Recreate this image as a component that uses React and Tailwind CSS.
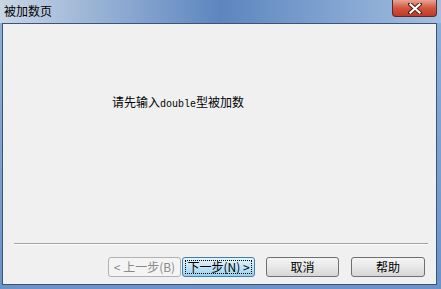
import React from 'react'

const cjk = { fontFamily: '"Noto Sans CJK SC", "Noto Sans", sans-serif' }

function WizButton({ children, disabled, focused, className = '' }) {
  let look = 'border-[#707070] bg-gradient-to-b from-[#f4f4f4] via-[#e8e8e8] to-[#d6d6d6] text-black'
  if (disabled) look = 'border-[#adb2b5] bg-[#f4f4f4] text-[#8a8a8a]'
  if (focused) look = 'border-[#3c7fb1] bg-gradient-to-b from-[#e5f4fc] via-[#c4e5f6] to-[#98d1ef] text-black'
  return (
    <div className={`relative h-[20px] w-[73px] rounded-[3px] border flex items-center justify-center text-[12px] leading-none ${look} ${className}`} style={cjk}>
      {focused && <div className="absolute inset-[2px] border border-dotted border-black" />}
      <span className="relative">{children}</span>
    </div>
  )
}

export default function App() {
  return (
    <div className="w-[441px] h-[289px] flex flex-col bg-gradient-to-b from-[#8fb0d8] to-[#6b93c8] select-none overflow-hidden">
      {/* title bar */}
      <div className="h-[23px] flex items-start bg-gradient-to-r from-[#c9d6e5] via-[#5d86bf] to-[#a3bfe0]">
        <span className="ml-[4px] mt-[4px] text-[12px] leading-[14px] text-black" style={cjk}>被加数页</span>
        <div className="flex-1" />
        <div className="mr-[4px] h-[17px] w-[45px] rounded-b-[4px] border border-t-0 border-[#5a2a2a] bg-gradient-to-b from-[#e8a393] via-[#d0553f] to-[#c23a26] flex items-center justify-center">
          <svg width="14" height="11" viewBox="0 0 14 11">
            <path d="M2 1 L12 10 M12 1 L2 10" stroke="#4a1a14" strokeWidth="4" strokeLinecap="square" />
            <path d="M2.5 1.5 L11.5 9.5 M11.5 1.5 L2.5 9.5" stroke="#ffffff" strokeWidth="2.2" strokeLinecap="square" />
          </svg>
        </div>
      </div>

      {/* client area */}
      <div className="ml-[2px] mr-[4px] mb-[4px] flex-1 flex flex-col border border-[#3b5478] bg-[#f0f0f0]">
        <div className="pt-[71px] pl-[109px] text-[12px] leading-[14px] text-black" style={cjk}>
          请先输入<span className="text-[10px]" style={{ fontFamily: '"Liberation Mono", monospace' }}>double</span>型被加数
        </div>
        <div className="flex-1" />
        <div className="ml-[11px] mr-[8px] h-[2px] border-t border-[#a0a0a0] border-b border-b-white" />
        <div className="mt-[12px] mb-[7px] pl-[105px] flex">
          <WizButton disabled>&lt; 上一步(B)</WizButton>
          <WizButton focused className="ml-[1px]">下一步(N) &gt;</WizButton>
          <WizButton className="ml-[11px]">取消</WizButton>
          <WizButton className="ml-[12px] w-[74px]">帮助</WizButton>
        </div>
      </div>
    </div>
  )
}
